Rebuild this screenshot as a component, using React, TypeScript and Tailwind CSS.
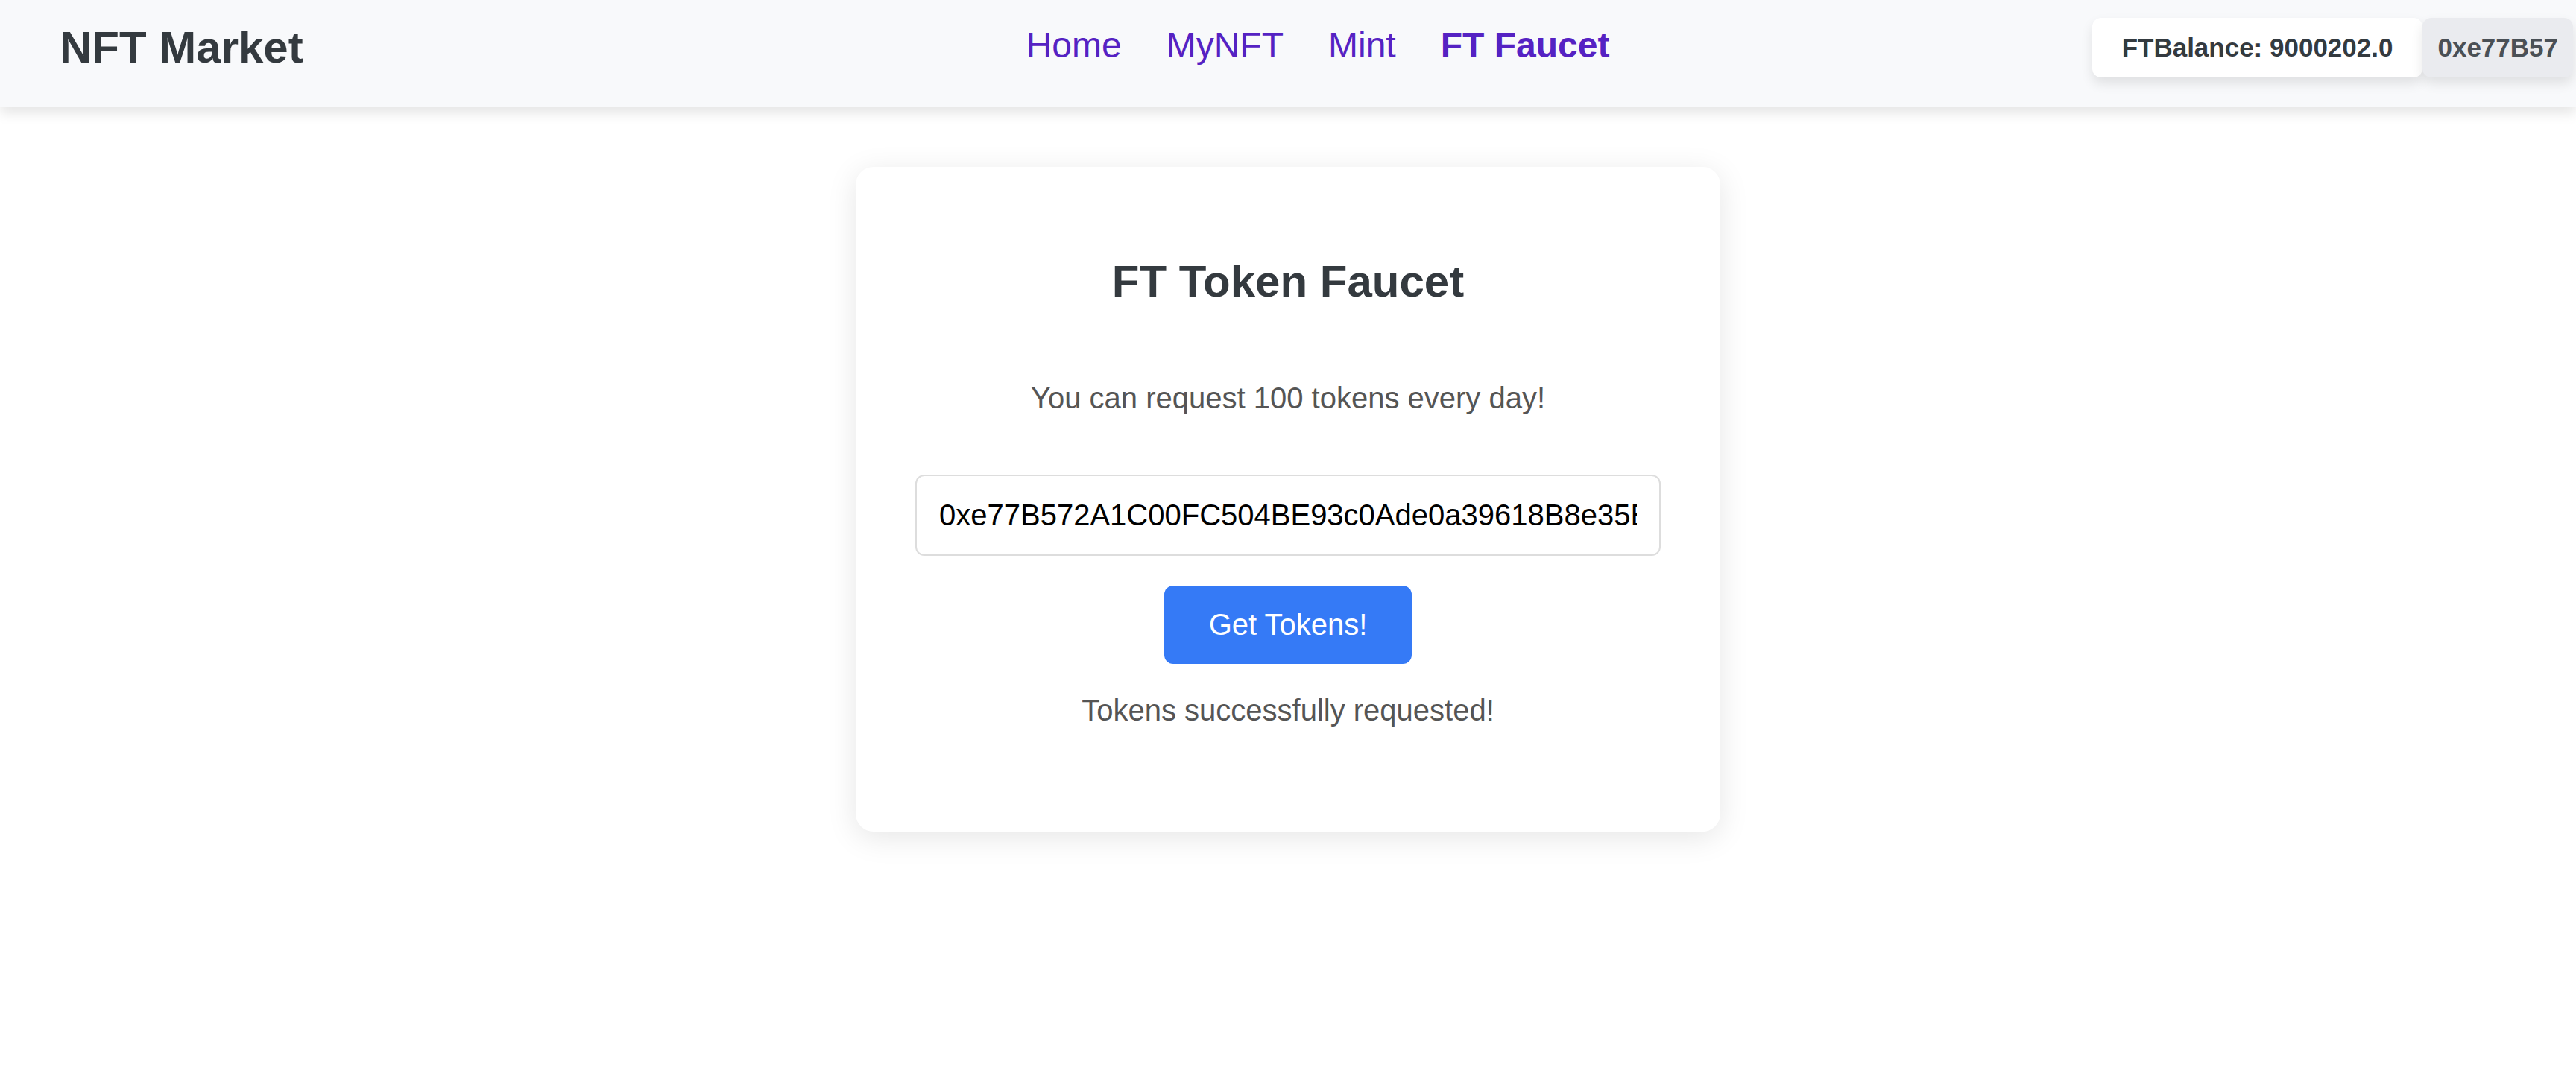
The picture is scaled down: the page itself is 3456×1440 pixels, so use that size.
import { useState } from "react";

const links = [
  { label: "Home", active: false },
  { label: "MyNFT", active: false },
  { label: "Mint", active: false },
  { label: "FT Faucet", active: true },
];

function Header() {
  return (
    <header className="grid grid-cols-[1fr_auto_1fr] items-center bg-[#f8f9fb] pt-6 pr-1 pb-10 shadow-[0_8px_16px_rgba(0,0,0,0.1)]">
      <div className="pl-20 text-[60px] leading-[68px] font-bold whitespace-nowrap text-[#343a3f]">
        NFT Market
      </div>
      <nav className="pb-1.5 pl-[84px]">
        <ul className="flex gap-[60px] text-[48px] leading-[54px] whitespace-nowrap text-[#5522c3]">
          {links.map((link) => (
            <li key={link.label}>
              <a
                href="#"
                aria-current={link.active ? "page" : undefined}
                className={link.active ? "font-bold" : "font-normal"}
              >
                {link.label}
              </a>
            </li>
          ))}
        </ul>
      </nav>
      <div className="flex justify-end text-[35px] leading-[40px] font-bold whitespace-nowrap">
        <div className="rounded-xl bg-white px-10 py-5 text-[#343a3f] shadow-[0_8px_16px_rgba(0,0,0,0.1)]">
          FTBalance: 9000202.0
        </div>
        <div className="rounded-xl bg-[#eaebef] p-5 text-[#4a5056] shadow-[0_8px_16px_rgba(0,0,0,0.1)]">
          0xe77B57
        </div>
      </div>
    </header>
  );
}

function Faucet() {
  const [address, setAddress] = useState("0xe77B572A1C00FC504BE93c0Ade0a39618B8e35E7");
  return (
    <main className="mx-auto mt-20 w-full max-w-[1160px] rounded-3xl bg-white p-20 text-center text-[40px] leading-[45px] text-[#555555] shadow-[0_8px_40px_rgba(0,0,0,0.1)]">
      <h1 className="mt-10 text-[60px] leading-[68px] font-bold text-[#343a3f]">
        FT Token Faucet
      </h1>
      <p className="mt-[100px]">You can request 100 tokens every day!</p>
      <form
        className="mt-20 flex flex-col items-center gap-10"
        onSubmit={(e) => e.preventDefault()}
      >
        <input
          type="text"
          aria-label="Wallet address"
          value={address}
          onChange={(e) => setAddress(e.target.value)}
          className="w-full rounded-xl border-2 border-[#dddddd] bg-white px-[30px] py-[30px] text-black"
        />
        <button type="submit" className="rounded-xl bg-[#357af6] px-[60px] py-[30px] text-white">
          Get Tokens!
        </button>
        <p role="status" className="mb-[60px]">
          Tokens successfully requested!
        </p>
      </form>
    </main>
  );
}

export default function App() {
  return (
    <div className="min-h-screen bg-white font-['Liberation_Sans',Arial,sans-serif]">
      <Header />
      <Faucet />
    </div>
  );
}
